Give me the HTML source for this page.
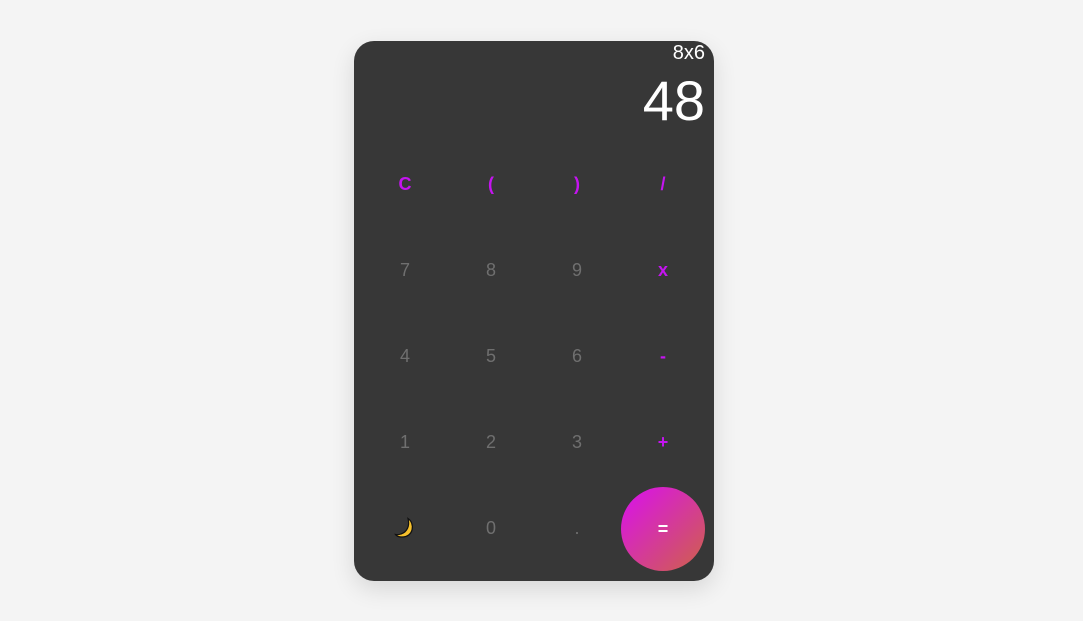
<!DOCTYPE html>
<html><head><style>
body{margin:0;background:#f4f4f4;width:1083px;height:621px;position:relative;font-family:"Liberation Sans",sans-serif;overflow:hidden}
.card{position:absolute;left:354px;top:41px;width:360px;height:540px;background:#373737;border-radius:20px;box-shadow:0 8px 24px rgba(0,0,0,0.12)}
.expr{position:absolute;right:9px;top:0;color:#fff;font-size:20px;line-height:24px}
.res{position:absolute;right:9px;top:30px;color:#fff;font-size:56px;line-height:60px}
.b{position:absolute;width:86px;height:86px;display:flex;align-items:center;justify-content:center;font-size:18px;color:#6f6f6f}
.op{color:#c514f0;font-weight:bold}
.eq{background:linear-gradient(135deg,#d90ff0,#cf6248);border-radius:50%;width:84px;height:84px;color:#fff;font-weight:bold}
</style></head><body>
<div class="card">
<div class="expr">8x6</div>
<div class="res">48</div>
<div class="b op" style="left:8px;top:100px">C</div>
<div class="b op" style="left:94px;top:100px">(</div>
<div class="b op" style="left:180px;top:100px">)</div>
<div class="b op" style="left:266px;top:100px">/</div>
<div class="b" style="left:8px;top:186px">7</div>
<div class="b" style="left:94px;top:186px">8</div>
<div class="b" style="left:180px;top:186px">9</div>
<div class="b op" style="left:266px;top:186px">x</div>
<div class="b" style="left:8px;top:272px">4</div>
<div class="b" style="left:94px;top:272px">5</div>
<div class="b" style="left:180px;top:272px">6</div>
<div class="b op" style="left:266px;top:272px">-</div>
<div class="b" style="left:8px;top:358px">1</div>
<div class="b" style="left:94px;top:358px">2</div>
<div class="b" style="left:180px;top:358px">3</div>
<div class="b op" style="left:266px;top:358px">+</div>
<div class="b" style="left:8px;top:444px"><svg width="22" height="22" viewBox="0 0 22 22"><path d="M14 1.5 C21 6 20 20 8 20 C5 20 2.5 19 1.5 17.5 C3 17.8 5 17.8 7 17 C13 15 16 9 14 1.5 Z" fill="#f6c02c" stroke="#111" stroke-width="1.2"/></svg></div>
<div class="b" style="left:94px;top:444px">0</div>
<div class="b" style="left:180px;top:444px">.</div>
<div class="b eq" style="left:267px;top:446px">=</div>
</div>
</body></html>
